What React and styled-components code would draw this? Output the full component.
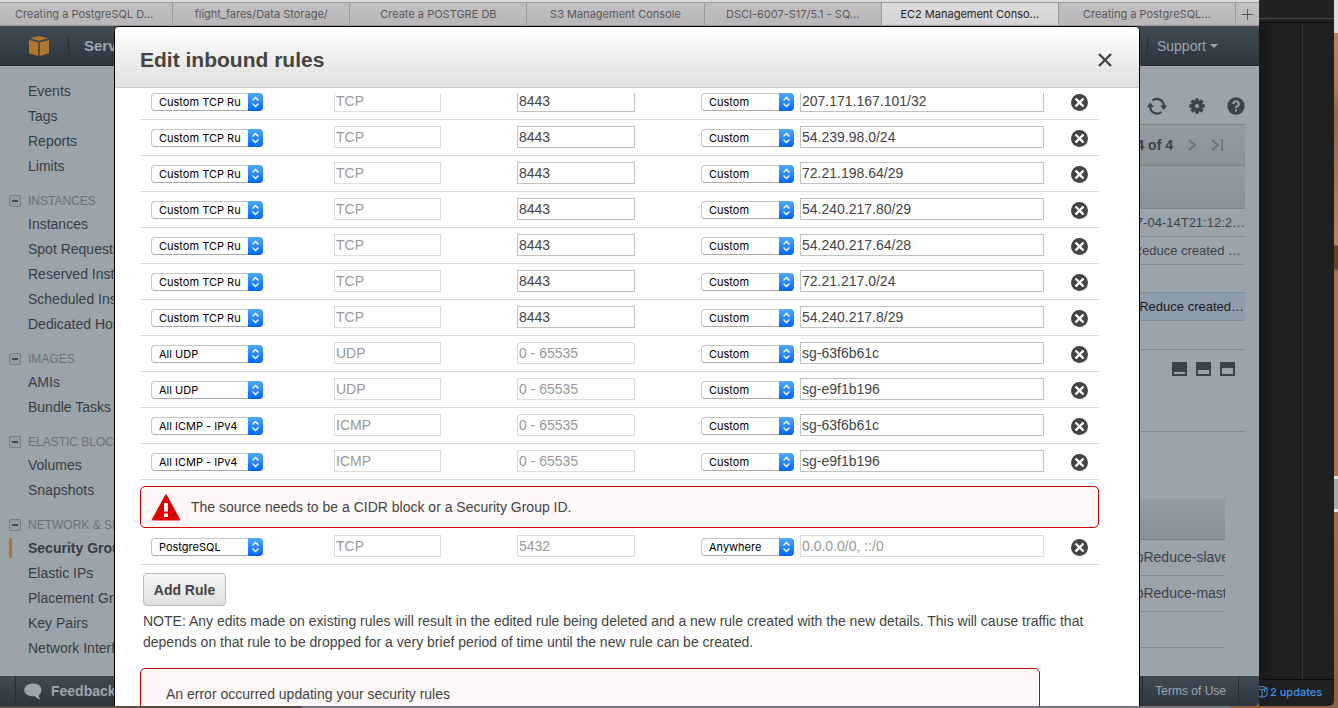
import React from "react";
import styled, { createGlobalStyle, css } from "styled-components";

const SANS = `"Liberation Sans", Arial, sans-serif`;
const SYSTEM = `Inter, Roboto, sans-serif`;

const GlobalStyle = createGlobalStyle`
  *, *::before, *::after { box-sizing: border-box; }
  html, body { margin: 0; height: 100%; overflow: hidden; }
  body { font-family: ${SANS}; font-size: 14px; color: #444; background: #5d5a5b; }
  button, input, select { font: inherit; margin: 0; }
  a { color: inherit; text-decoration: none; }
  ul { list-style: none; margin: 0; padding: 0; }
`;

const Desktop = styled.div`
  display: flex;
  height: 100vh;
  padding-bottom: 2px;
  background: linear-gradient(90deg, #5b4a3e 302px, #77757a 302px, #77757a 92%, #8f6340 92%) bottom / 100% 8px no-repeat #8f6340;
`;

/* Strip of wallpaper, with the edges of the desktop icons on it. */
const Wallpaper = styled.div`
  flex: none;
  width: 4px;
  background: linear-gradient(
    180deg,
    #dcdcdc 33px, #b8855b 33px, #a97b55 90px, #8a6a50 110px, #b8855b 245px,
    #5c4326 246px, #5c4326 268px, #a8754d 272px, #a8754d 476px,
    #e6e6e6 476px, #e6e6e6 479px, #a9a9a9 479px, #a9a9a9 509px, #e6e6e6 509px, #e6e6e6 512px,
    #a0704a 512px, #8f6340 100%
  );
`;

/* ---------- browser window ---------- */
const Browser = styled.div`
  position: relative;
  z-index: 1;
  flex: 1;
  min-width: 0;
  display: flex;
  flex-direction: column;
  overflow: hidden;
  border-bottom-right-radius: 5px;
`;

const TabStrip = styled.nav`
  flex: none;
  display: flex;
  height: 26px;
  padding-top: 2px;
  background: #dddbdd;
`;

const Tabs = styled.div`
  flex: 1;
  min-width: 0;
  display: flex;
  margin-left: -4px;
`;

const tabFace = css`
  border: 0;
  border-top: 1px solid #9b999b;
  border-bottom: 1px solid #9b999b;
  background: linear-gradient(#c1bfc1, #b9b7b9);
  color: #5a585a;
`;

const Tab = styled.button`
  ${tabFace}
  flex: 1 1 0;
  min-width: 0;
  padding: 0 8px;
  border-right: 1px solid #9b999b;
  font-family: ${SYSTEM};
  font-size: 11px;
  line-height: 22px;
  white-space: nowrap;
  overflow: hidden;
  ${(p) => p.$active && css`
    background: linear-gradient(#dddbdd, #d5d3d5);
    color: #1f1f1f;
  `}
`;

const NewTab = styled.button`
  ${tabFace}
  flex: none;
  width: 23px;
  padding: 0;
  display: grid;
  place-items: center;
`;

const bar = css`
  flex: none;
  display: flex;
  align-items: center;
  background: linear-gradient(#414b54, #2d363e);
  color: #9da6ae;
`;

const ConsoleHeader = styled.header`
  ${bar}
  height: 40px;
  padding: 0 41px 0 28px;
  border-bottom: 1px solid #262d33;
  justify-content: space-between;
`;

const HeaderGroup = styled.div`
  display: flex;
  align-items: center;
  height: 20px;
`;

const ServicesLink = styled.a`
  margin-left: 18px;
  padding-left: 15px;
  border-left: 1px solid #283037;
  font-size: 15px;
  font-weight: bold;
  line-height: 20px;
`;

const SupportLink = styled.a`
  display: flex;
  align-items: center;
  gap: 4px;
  padding-left: 9px;
  border-left: 1px solid #283037;
  line-height: 20px;
`;

const Main = styled.div`
  flex: 1;
  min-height: 0;
  display: flex;
  overflow: hidden;
  background: #9ca4ab;
`;

const Sidebar = styled.nav`
  flex: none;
  width: 180px;
  padding-top: 12px;
`;

const GroupTitle = styled.h2`
  display: flex;
  align-items: center;
  gap: 7px;
  height: 33px;
  margin: 0;
  padding: 12px 0 0 9px;
  font-size: 12px;
  font-weight: normal;
  color: #6a7279;
`;

const Collapse = styled.button`
  width: 12px;
  height: 12px;
  padding: 0;
  display: grid;
  place-items: center;
  border: 1px solid #757d84;
  border-radius: 2px;
  background: #969ea5;
`;

const NavItem = styled.li`
  display: flex;
  align-items: center;
  height: 25px;
  color: #363d43;
  font-weight: ${(p) => (p.$active ? "bold" : "normal")};
`;

const NavLink = styled.a`
  margin-left: 9px;
  padding-left: 16px;
  border-left: 3px solid ${(p) => (p.$active ? "#b0772a" : "transparent")};
  line-height: 20px;
  white-space: nowrap;
`;

const Content = styled.main`
  flex: 1;
  min-width: 0;
  padding: 0 14px 0 0;
  display: flex;
  flex-direction: column;
  color: #3b434a;
`;

const Toolbar = styled.div`
  flex: none;
  display: flex;
  justify-content: flex-end;
  align-items: center;
  gap: 22px;
  height: 58px;
  padding-top: 22px;
`;

const IconButton = styled.button`
  display: grid;
  place-items: center;
  padding: 0;
  border: 0;
  background: none;
  color: inherit;
`;

const Pager = styled.div`
  flex: none;
  display: flex;
  justify-content: flex-end;
  align-items: center;
  gap: 14px;
  height: 42px;
  padding-right: 22px;
  border-top: 1px solid #7b838a;
  border-bottom: 1px solid #7b838a;
  background: linear-gradient(#949ca3, #8b9399);
  font-weight: bold;
`;

const GroupTable = styled.table`
  width: 100%;
  border-collapse: collapse;
  font-size: 13px;
  text-align: right;
  white-space: nowrap;
  th {
    height: 42px;
    background: linear-gradient(#949ca3, #899198);
    border-bottom: 1px solid #7b838a;
  }
`;

const GroupCell = styled.td`
  height: 28px;
  padding: 0 ${(p) => p.$trail || 0}px 0 0;
  border-bottom: 1px solid #868e95;
  ${(p) => p.$selected && css`background: #8e9dac; color: #161b20;`}
`;

const PaneSwitch = styled.div`
  flex: none;
  display: flex;
  justify-content: flex-end;
  align-items: flex-start;
  gap: 9px;
  height: 83px;
  padding: 12px 10px 0 0;
  margin-top: 28px;
  border-top: 1px solid #7f878e;
  border-bottom: 1px solid #7f878e;
`;

const DetailTable = styled.table`
  width: calc(100% - 20px);
  margin-top: 66px;
  table-layout: fixed;
  border-collapse: collapse;
  white-space: nowrap;
  th {
    height: 42px;
    background: linear-gradient(#949ca3, #899198);
    border-bottom: 1px solid #7b838a;
  }
  td {
    height: 36px;
    padding: 0 0 2px;
    overflow: hidden;
    border-bottom: 1px solid #868e95;
  }
`;

const Footer = styled.footer`
  ${bar}
  height: 30px;
  padding: 0 20px 0 15px;
  justify-content: space-between;
`;

const FooterLink = styled.a`
  display: flex;
  align-items: center;
  gap: 9px;
  height: 30px;
  padding: 0 ${(p) => (p.$strong ? 8 : 12)}px;
  border: solid #252d34;
  border-width: 0 ${(p) => (p.$strong ? 0 : 1)}px 0 1px;
  font-size: ${(p) => (p.$strong ? 14 : 12)}px;
  font-weight: ${(p) => (p.$strong ? "bold" : "normal")};
`;

/* ---------- dialog ---------- */
const Dialog = styled.section`
  position: absolute;
  inset: 26px 119px 0 114px;
  display: flex;
  flex-direction: column;
  overflow: hidden;
  background: #fff;
  border: 1px solid #000;
  border-bottom: 0;
  border-radius: 5px 5px 0 0;
`;

const DialogHeader = styled.header`
  flex: none;
  display: flex;
  align-items: center;
  justify-content: space-between;
  height: 61px;
  padding: 6px 27px 0 25px;
  border-bottom: 1px solid #c8c8c8;
  background: linear-gradient(#fff, #dfdfdf);
`;

const DialogTitle = styled.h1`
  margin: 0;
  font-size: 21px;
  line-height: 28px;
`;

const DialogBody = styled.div`
  flex: 1;
  min-height: 0;
  margin-top: 5px;
  padding: 0 40px 0 25px;
  overflow: hidden;
`;

/* The list is shown scrolled part of the way into its first visible row. */
const RulesTable = styled.table`
  width: 100%;
  margin-top: -9px;
  table-layout: fixed;
  border-collapse: separate;
  border-spacing: 0;
`;

const RuleCell = styled.td`
  height: 36px;
  padding: 0 0 2px 11px;
  border-bottom: 1px solid #ddd;
  vertical-align: middle;
`;

const ActionCell = styled(RuleCell)`
  padding: 2px 0 0;
  button { margin: 0 auto; }
`;

const Source = styled.div`
  display: flex;
  align-items: center;
  gap: 6px;
  padding-right: 16px;
`;

const Field = styled.input`
  display: block;
  flex: 1;
  min-width: 0;
  width: ${(p) => p.$width || "auto"};
  height: 22px;
  padding: 0 1px;
  border: 1px solid #c2c2c2;
  border-radius: 0;
  background: #fff;
  color: #444;
  &:disabled { border-color: #ddd; color: #999; }
`;

const SelectBox = styled.div`
  position: relative;
  flex: none;
  width: ${(p) => p.$width};
  height: 18px;
  margin-top: 3px;
`;

const Select = styled.select`
  display: block;
  appearance: none;
  width: 100%;
  height: 18px;
  padding: 0 16px 0 7px;
  border: 1px solid #c6c6c6;
  border-bottom-color: #aaa;
  border-radius: 4px;
  background: #fff;
  color: #000;
  font-family: ${SYSTEM};
  font-size: 11px;
  line-height: 16px;
`;

const SelectArrows = styled.span`
  position: absolute;
  inset: 0 0 0 auto;
  width: 15px;
  display: grid;
  place-items: center;
  border-radius: 0 4px 4px 0;
  background: linear-gradient(#4facfd, #0065ff);
  pointer-events: none;
`;

const AlertCell = styled.td`
  padding: 6px 0 1px;
`;

const Alert = styled.div`
  display: flex;
  align-items: center;
  gap: 11px;
  height: 42px;
  padding: 0 11px;
  border: 1px solid #cc0000;
  border-radius: 5px;
  background: #fff8f8;
`;

const UpdateAlert = styled(Alert)`
  width: calc(100% - 59px);
  height: 52px;
  margin-top: 15px;
  padding: 0 25px;
`;

const AddRule = styled.button`
  display: block;
  margin: 8px 3px 5px;
  height: 33px;
  width: 83px;
  padding: 0;
  border: 1px solid #bcbcbc;
  border-radius: 4px;
  background: linear-gradient(#f5f5f5, #e0e0e0);
  color: #444;
  font-weight: bold;
`;

const Note = styled.p`
  margin: 0 3px;
  line-height: 21px;
`;

/* ---------- editor window behind the browser ---------- */
const Editor = styled.aside`
  flex: none;
  width: 75px;
  display: flex;
  flex-direction: column;
  background: #1e1f21;
  border-bottom-right-radius: 5px;
`;

const EditorTitle = styled.div`
  height: 23px;
  padding-top: 18px;
  background: #222;
  border-bottom: 1px solid #0c0c0c;
  &::before { content: ""; display: block; height: 1px; background: #484848; }
`;

const EditorPane = styled.div`
  flex: 1;
  margin-right: 31px;
  border-right: 1px solid #343537;
  background: linear-gradient(90deg, #17181a, #1e1f21 20px);
`;

const EditorStatus = styled.div`
  display: flex;
  align-items: center;
  gap: 2px;
  height: 27px;
  padding-bottom: 2px;
  border-top: 1px solid #0a0a0a;
  color: #4493e3;
  font-family: ${SYSTEM};
  font-size: 11px;
  font-weight: 500;
  white-space: nowrap;
`;

/* ---------- drawings ---------- */
const AwsCube = () => (
  <svg width="22" height="22" viewBox="0 0 22 22" fill="#b0772a" aria-hidden="true">
    <path d="M2 3.300 11 1l9 2.300L11 5.800z" />
    <path d="M1 5l9.300 2.300V21L1 18.200zM21 5l-9.300 2.300V21L21 18.200z" />
  </svg>
);

const CircleX = () => (
  <svg width="17" height="17" viewBox="0 0 17 17" aria-hidden="true">
    <circle cx="8.500" cy="8.500" r="8.500" fill="#444" />
    <path d="M4.500 4.500l8 8M12.500 4.500l-8 8" stroke="#fff" strokeWidth="2.400" />
  </svg>
);

const CloseX = () => (
  <svg width="14" height="14" viewBox="0 0 14 14" aria-hidden="true">
    <path d="M1 1l12 12M13 1L1 13" stroke="#444" strokeWidth="2.400" />
  </svg>
);

const Arrows = () => (
  <svg width="9" height="12" viewBox="0 0 9 12" fill="none" stroke="#fff" strokeWidth="1.300" aria-hidden="true">
    <path d="M1.500 4.500l3-3 3 3M1.500 7.500l3 3 3-3" />
  </svg>
);

const Warning = () => (
  <svg width="28" height="27" viewBox="0 0 28 27" aria-hidden="true">
    <path d="M14 1.500L27 25.500H1z" fill="#e00000" stroke="#e00000" strokeWidth="2" strokeLinejoin="round" />
    <path d="M12 9h4v8.500h-4zM12 19.500h4v3.500h-4z" fill="#fff" />
  </svg>
);

const Refresh = () => (
  <svg width="20" height="18" viewBox="0 0 20 18" fill="none" stroke="currentColor" strokeWidth="2.200" aria-hidden="true">
    <path d="M5.500 3.500A7 7 0 0 1 16.800 9.500M14.500 15A7 7 0 0 1 3.200 9" />
    <path d="M13 8.500h7.200L16.700 13zM7 10H-.2L3.300 5.500z" fill="currentColor" stroke="none" />
  </svg>
);

const Gear = () => (
  <svg width="16" height="16" viewBox="0 0 16 16" aria-hidden="true">
    <circle cx="8" cy="8" r="4" fill="none" stroke="currentColor" strokeWidth="3.800" />
    <g stroke="currentColor" strokeWidth="3.400">
      {[0, 45, 90, 135].map((a) => (
        <path key={a} d="M8 .3v3M8 12.700v3" transform={`rotate(${a} 8 8)`} />
      ))}
    </g>
  </svg>
);

const Help = () => (
  <svg width="18" height="18" viewBox="0 0 18 18" aria-hidden="true">
    <circle cx="9" cy="9" r="8.700" fill="currentColor" />
    <path d="M6.200 7a2.800 2.600 0 1 1 4.200 2.200Q9 10 9 11.300" fill="none" stroke="#9ca4ab" strokeWidth="2" />
    <path d="M8 12.500h2v2H8z" fill="#9ca4ab" />
  </svg>
);

const PageArrow = ({ last }) => (
  <svg width={last ? 12 : 10} height="14" viewBox={`0 0 ${last ? 12 : 10} 14`} fill="none" stroke="#6c747b" strokeWidth="2" aria-hidden="true">
    <path d={last ? "M1 2l6 5-6 5M11 1v12" : "M2 2l6 5-6 5"} />
  </svg>
);

const Pane = ({ cut }) => (
  <svg width="15" height="14" viewBox="0 0 15 14" aria-hidden="true">
    <path d="M0 0h15v14H0z" fill="#3b434a" />
    <path d={`M2 ${cut}h11V12H2z`} fill="#9ca4ab" />
  </svg>
);

const Bubble = () => (
  <svg width="18" height="17" viewBox="0 0 18 17" fill="#9da6ae" aria-hidden="true">
    <path d="M9 .5C4 .5.300 3.300.300 7S4 13.300 9 13.300q1 0 1.800-.2 2 3 5.400 3.400-1.500-2-1.300-4.600Q17.500 10 17.500 7C17.500 3.300 14 .5 9 .5z" />
  </svg>
);

const Package = () => (
  <svg width="9" height="12" viewBox="0 0 9 12" fill="none" stroke="currentColor" aria-hidden="true">
    <path d="M0 1l4-.5L8 2v7.500L3 11.500 0 10M0 3l3 1 5-2M3 4v7.500M5.500 3v3" />
  </svg>
);

/* ---------- data ---------- */
const tabs = [
  "Creating a PostgreSQL D...",
  "flight_fares/Data Storage/",
  "Create a POSTGRE DB",
  "S3 Management Console",
  "DSCI-6007-S17/5.1 - SQ...",
  "EC2 Management Conso...",
  "Creating a PostgreSQL...",
];

const navGroups = [
  { items: ["Events", "Tags", "Reports", "Limits"] },
  {
    title: "INSTANCES",
    items: ["Instances", "Spot Requests", "Reserved Instances", "Scheduled Instances", "Dedicated Hosts"],
  },
  { title: "IMAGES", items: ["AMIs", "Bundle Tasks"] },
  { title: "ELASTIC BLOCK STORE", items: ["Volumes", "Snapshots"] },
  {
    title: "NETWORK & SECURITY",
    items: ["Security Groups", "Elastic IPs", "Placement Groups", "Key Pairs", "Network Interfaces"],
  },
];

const tcp = (source) => ({ type: "Custom TCP Ru", protocol: "TCP", port: "8443", source, editable: true });

const rules = [
  tcp("207.171.167.101/32"),
  tcp("54.239.98.0/24"),
  tcp("72.21.198.64/29"),
  tcp("54.240.217.80/29"),
  tcp("54.240.217.64/28"),
  tcp("72.21.217.0/24"),
  tcp("54.240.217.8/29"),
  { type: "All UDP", protocol: "UDP", port: "0 - 65535", source: "sg-63f6b61c" },
  { type: "All UDP", protocol: "UDP", port: "0 - 65535", source: "sg-e9f1b196" },
  { type: "All ICMP - IPv4", protocol: "ICMP", port: "0 - 65535", source: "sg-63f6b61c" },
  { type: "All ICMP - IPv4", protocol: "ICMP", port: "0 - 65535", source: "sg-e9f1b196" },
];

const newRule = { type: "PostgreSQL", protocol: "TCP", port: "5432", source: "0.0.0.0/0, ::/0", anywhere: true };

function Dropdown({ value, width, label }) {
  return (
    <SelectBox $width={width}>
      <Select aria-label={label} defaultValue={value}>
        <option>{value}</option>
      </Select>
      <SelectArrows><Arrows /></SelectArrows>
    </SelectBox>
  );
}

function Rule({ rule }) {
  return (
    <tr>
      <RuleCell><Dropdown label="Type" value={rule.type} width="112px" /></RuleCell>
      <RuleCell><Field aria-label="Protocol" $width="107px" defaultValue={rule.protocol} disabled /></RuleCell>
      <RuleCell><Field aria-label="Port range" $width="118px" defaultValue={rule.port} disabled={!rule.editable} /></RuleCell>
      <RuleCell>
        <Source>
          <Dropdown label="Source type" value={rule.anywhere ? "Anywhere" : "Custom"} width="93px" />
          <Field aria-label="Source" defaultValue={rule.source} disabled={rule.anywhere} />
        </Source>
      </RuleCell>
      <ActionCell><IconButton aria-label="Delete rule"><CircleX /></IconButton></ActionCell>
    </tr>
  );
}

export default function App() {
  return (
    <Desktop>
      <GlobalStyle />
      <Browser>
        <TabStrip>
          <Tabs>
            {tabs.map((t, i) => <Tab key={t} $active={i === 5}>{t}</Tab>)}
          </Tabs>
          <NewTab aria-label="New tab">
            <svg width="11" height="11" viewBox="0 0 11 11" stroke="#5a585a" aria-hidden="true">
              <path d="M5.500 0v11M0 5.500h11" />
            </svg>
          </NewTab>
        </TabStrip>

        <ConsoleHeader>
          <HeaderGroup>
            <AwsCube />
            <ServicesLink href="#services">Services</ServicesLink>
          </HeaderGroup>
          <HeaderGroup>
            <SupportLink href="#support">
              Support
              <svg width="8" height="4" viewBox="0 0 8 4" fill="currentColor" aria-hidden="true"><path d="M0 0h8L4 4z" /></svg>
            </SupportLink>
          </HeaderGroup>
        </ConsoleHeader>

        <Main>
          <Sidebar>
            {navGroups.map((g, i) => (
              <div key={i}>
                {g.title && (
                  <GroupTitle>
                    <Collapse aria-label={`Collapse ${g.title}`}>
                      <svg width="6" height="2" aria-hidden="true"><path d="M0 0h6v2H0z" fill="#454d54" /></svg>
                    </Collapse>
                    {g.title}
                  </GroupTitle>
                )}
                <ul>
                  {g.items.map((item) => {
                    const active = item === "Security Groups";
                    return (
                      <NavItem key={item} $active={active}>
                        <NavLink href="#nav" $active={active}>{item}</NavLink>
                      </NavItem>
                    );
                  })}
                </ul>
              </div>
            ))}
          </Sidebar>
          <Content>
            <Toolbar>
              <IconButton aria-label="Refresh"><Refresh /></IconButton>
              <IconButton aria-label="Settings"><Gear /></IconButton>
              <IconButton aria-label="Help"><Help /></IconButton>
            </Toolbar>
            <Pager>
              1 to 4 of 4
              <IconButton aria-label="Next page"><PageArrow /></IconButton>
              <IconButton aria-label="Last page"><PageArrow last /></IconButton>
            </Pager>
            <GroupTable>
              <thead><tr><th /></tr></thead>
              <tbody>
                <tr><GroupCell>2017-04-14T21:12:2…</GroupCell></tr>
                <tr><GroupCell $trail={4}>ElasticMapReduce created …</GroupCell></tr>
                <tr><GroupCell /></tr>
                <tr><GroupCell $trail={1} $selected>ElasticMapReduce created…</GroupCell></tr>
              </tbody>
            </GroupTable>
            <PaneSwitch>
              <IconButton aria-label="Small pane"><Pane cut={10} /></IconButton>
              <IconButton aria-label="Half pane"><Pane cut={8} /></IconButton>
              <IconButton aria-label="Large pane"><Pane cut={6} /></IconButton>
            </PaneSwitch>
            <DetailTable>
              <colgroup><col /><col width="150" /></colgroup>
              <thead><tr><th /><th /></tr></thead>
              <tbody>
                <tr><td /><td>ElasticMapReduce-slave</td></tr>
                <tr><td /><td>ElasticMapReduce-master</td></tr>
                <tr><td /><td /></tr>
              </tbody>
            </DetailTable>
          </Content>
        </Main>

        <Footer>
          <FooterLink href="#feedback" $strong><Bubble />Feedback</FooterLink>
          <FooterLink href="#terms">Terms of Use</FooterLink>
        </Footer>

        <Dialog role="dialog" aria-labelledby="dialog-title">
          <DialogHeader>
            <DialogTitle id="dialog-title">Edit inbound rules</DialogTitle>
            <IconButton aria-label="Close"><CloseX /></IconButton>
          </DialogHeader>
          <DialogBody>
            <RulesTable>
              <colgroup>
                <col width="183" /><col width="183" /><col width="184" /><col /><col width="39" />
              </colgroup>
              <tbody>
                {rules.map((r, i) => <Rule key={i} rule={r} />)}
                <tr>
                  <AlertCell colSpan={5}>
                    <Alert role="alert"><Warning />The source needs to be a CIDR block or a Security Group ID.</Alert>
                  </AlertCell>
                </tr>
                <Rule rule={newRule} />
              </tbody>
            </RulesTable>
            <AddRule>Add Rule</AddRule>
            <Note>
              NOTE: Any edits made on existing rules will result in the edited rule being deleted and a new rule
              created with the new details. This will cause traffic that depends on that rule to be dropped for a
              very brief period of time until the new rule can be created.
            </Note>
            <UpdateAlert role="alert">An error occurred updating your security rules</UpdateAlert>
          </DialogBody>
        </Dialog>
      </Browser>

      <Editor>
        <EditorTitle />
        <EditorPane />
        <EditorStatus><Package />2 updates</EditorStatus>
      </Editor>
      <Wallpaper />
    </Desktop>
  );
}
